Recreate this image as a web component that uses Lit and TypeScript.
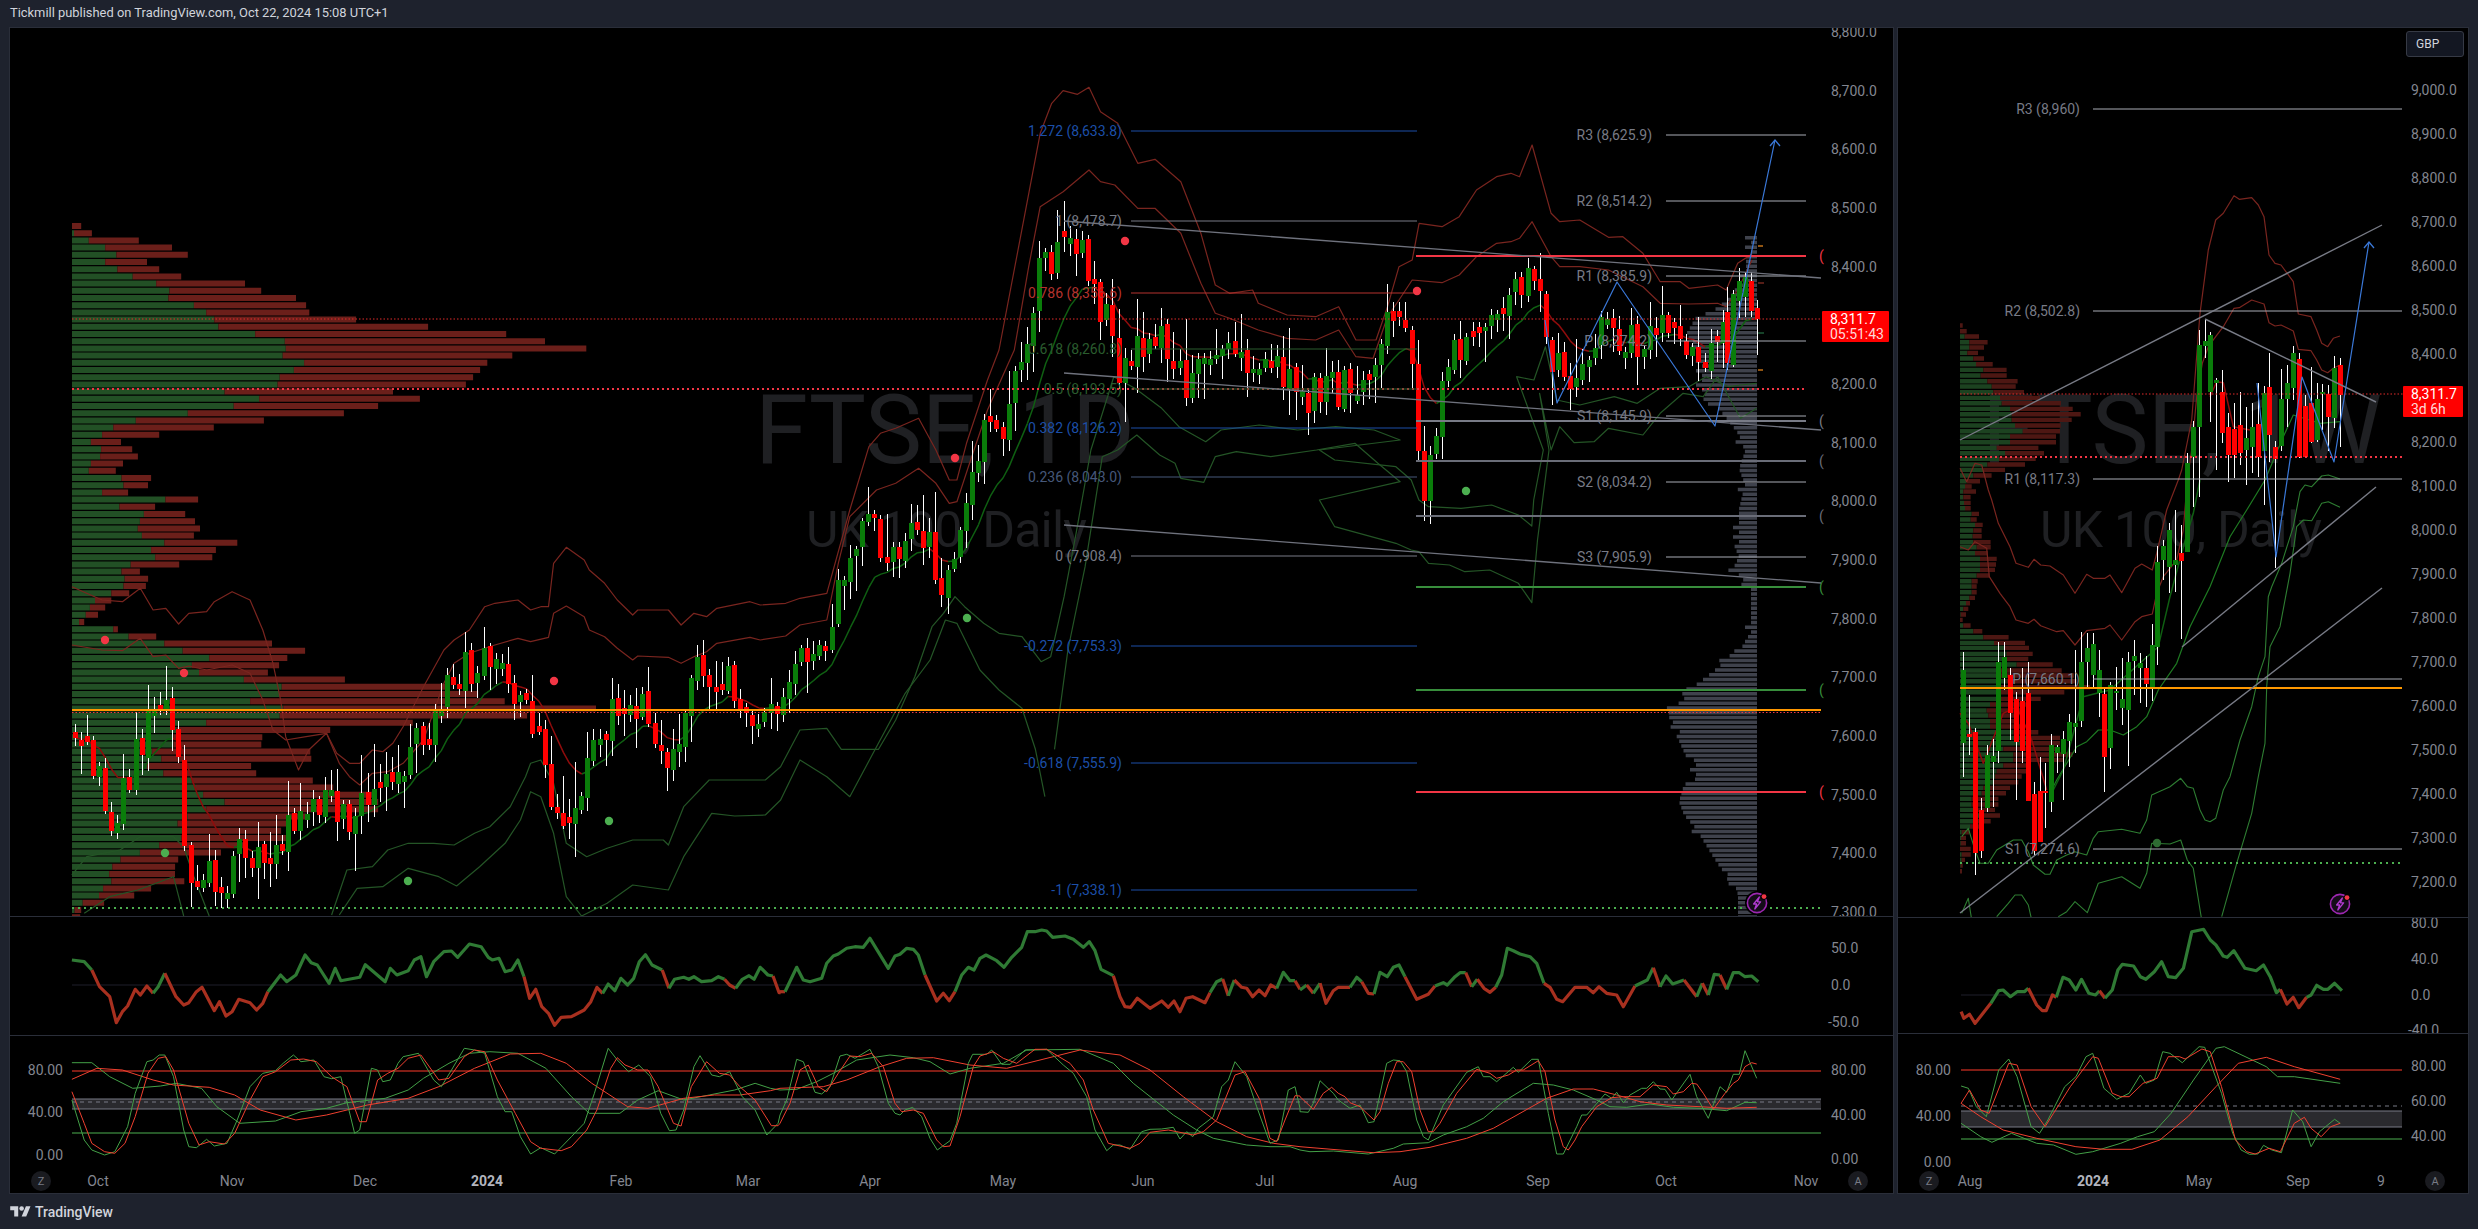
import { LitElement, html, svg, css } from "lit";
import { customElement } from "lit/decorators.js";

type P = number[];
const Z = (ox: number, oy: number, hf: number, pts: P[]) => pts.map(([x, y]) => [ox + x / hf, oy + y / 3]);
const d = (pts: P[]) => "M" + pts.map((p) => p[0].toFixed(1) + " " + p[1].toFixed(1)).join("L");
const rng = (seed: number) => () => {
  seed |= 0; seed = (seed + 0x6d2b79f5) | 0;
  let t = Math.imul(seed ^ (seed >>> 15), 1 | seed);
  t = (t + Math.imul(t ^ (t >>> 7), 61 | t)) ^ t;
  return ((t ^ (t >>> 14)) >>> 0) / 4294967296;
};
const interp = (tab: P[], x: number) => {
  if (x <= tab[0][0]) return tab[0][1];
  for (let i = 1; i < tab.length; i++) {
    if (x <= tab[i][0]) {
      const [a, b] = tab[i - 1], [c, e] = tab[i];
      return b + ((e - b) * (x - a)) / (c - a || 1);
    }
  }
  return tab[tab.length - 1][1];
};
const rectPath = (x: number, y: number, w: number, h: number) =>
  `M${x.toFixed(1)} ${y.toFixed(1)}h${w.toFixed(1)}v${h.toFixed(1)}h${(-w).toFixed(1)}z`;

const C = {
  axis: "#838690", hline: "#a9acb5", gray: "#787b86", red: "#f23645", green: "#388e3c",
  orange: "#ff9800", blue: "#1c4fa8", dimGreen: "#2a5c2e", slate: "#46587a", bRed: "#b5332e",
  upRed: "#7a251f", lowGreen: "#245526", candleUp: "#0a7d0a", candleDn: "#ff0000", zig: "#3a78d8",
};

/* ---------- left chart data ---------- */
const LP = [
  [141,159,0],[145,180],[174,272],[206,337],[228,368],[206,288],[230,312],[260,355],[306,480],[332,512],[330,580],[380,600],[404,606],[420,698],[428,839],[500,992],[558,1068],[560,1149],[554,1004],[596,955],[576,941],[548,927],[544,913],[440,770],[508,823],
  [458,741],[368,674],[266,517],[222,419],[200,312],[178,237],[198,259],[196,270],[178,241],[174,227],[238,296],[242,290],[200,251],[324,388],[234,304],[282,363],[274,382],[270,392],[278,380],[322,465],[296,423],[304,416],[256,351],[238,274],[244,290],[242,286],[218,253],[186,218],[176,206],[168,192],[155,165],[222,231],[252,306],[322,533],[358,598],[410,563],[376,547],[390,525],[478,676],[552,872],[548,937],[490,989],[555,1168],[548,1033],[404,809],[346,647],[340,514],[340,512],[298,608],[316,610],[288,492],[320,502],[376,613],[384,653],[398,735],[440,741],[404,741],[368,600],[348,570],[360,551],[355,560],[312,480],[274,433],[236,349],[220,343],[214,343],[218,361],[202,296],[194,263],[162,204],[146,159],[141,157],
];
const lpG = LP.map((r, i) => rectPath(72, 223 + i * 7.2, (r[0] - 141) / 1.96, 6)).join("");
const lpR = LP.map((r, i) => rectPath(72 + (r[0] - 141) / 1.96, 223 + i * 7.2, (r[1] - r[0]) / 1.96, 6)).join("");

const GP: P[] = [[236,6],[252,6],[253,11],[277,11],[285,20],[297,28],[307,41],[317,62],[333,71],[345,60],[360,55],[390,55],[400,45],[417,30],[433,18],[450,12],[467,18],[483,12],[507,18],[540,18],[541,24],[555,18],[567,24],[580,12],[587,6],[633,6],[637,12],[643,12],[650,24],[657,30],[663,36],[670,44],[677,53],[683,61],[690,67],[697,73],[707,85],[713,90],[727,79],[737,73],[750,67],[763,61],[777,61],[783,73],[800,78],[813,73],[827,61],[840,53],[853,45],[867,36],[877,24],[893,19],[916,19]];
const gpPath = (() => {
  const r = rng(9); let s = "";
  for (let y = 236; y < 916; y += 4.75) {
    const w = interp(GP, y) + (r() < 0.25 ? 6 : 0);
    s += rectPath(1757 - w, y, w, 3.4);
  }
  return s;
})();

const closePts: P[] = [
  ...Z(0, 400, 1.96, [[150,1000],[190,1100],[215,1300],[245,1180],[265,1040],[300,960],[325,870],[335,900],[350,1100],[360,1300],[372,1400],[410,1420],[430,1500],[455,1450],[467,1300],[490,1350],[525,1360],[550,1350],[575,1270],[600,1220],[660,1230],[695,1290],[715,1180],[770,1120],[810,1040],[835,1000],[860,950],[885,850],[930,785],[955,780],[990,840],[1030,900],[1060,1000],[1085,1200],[1100,1260],[1125,1190],[1170,1000],[1200,930],[1250,930],[1290,1000],[1310,1130],[1330,1020],[1350,900],[1360,780],[1385,860],[1420,850],[1460,920],[1490,940],[1530,880]]),
  ...Z(800, 350, 2.613, [[10,890],[55,940],[90,750],[130,560],[200,540],[250,620],[300,545],[345,600],[375,700],[405,650],[425,450],[465,360],[485,220],[515,190],[535,250],[555,100],[585,20]]),
  ...Z(1000, 0, 1.742, [[55,900],[75,770],[110,750],[145,770],[175,900],[215,1150],[240,1000],[285,1020],[330,1170],[390,1040],[430,1100],[490,1120],[530,1180],[570,1150],[640,1200],[670,1000],[700,880],[715,1100],[730,1350]]),
  ...Z(1350, 450, 2.613, [[177,150],[207,85]]),
  ...Z(1000, 0, 1.742, [[760,1250],[790,1080],[820,950],[870,1000],[915,830],[940,830],[950,1000],[985,1150],[1010,1060],[1050,1000],[1090,1040],[1150,1000],[1170,1030],[1210,1060],[1240,1040],[1265,1000],[1270,900]]),
];

type Bar = { x: number; o: number; c: number; hi: number; lo: number };
const leftBars: Bar[] = (() => {
  const r = rng(42); const out: Bar[] = [];
  let prev = 735;
  for (let i = 0; i < 271; i++) {
    const x = 75 + i * 6.105;
    const c = interp(closePts, x) + (r() - 0.5) * 44;
    let o = prev + (r() - 0.5) * 6;
    if (Math.abs(o - c) < 4) o = c + (r() < 0.5 ? 6 : -6);
    const top = Math.min(o, c), bot = Math.max(o, c);
    out.push({ x, o, c, hi: top - 3 - r() * r() * 44, lo: bot + 3 + r() * r() * 38 });
    prev = c;
  }
  const tail = [[146,335,490,1,260,510],[158,282,495,0,270,500],[170,243,303,0,205,355],[181,232,290,0,215,350],[192,243,332,1,215,350],[203,323,358,1,300,465]];
  for (const [zx, a, b, dn, h, l] of tail) {
    const top = 200 + a / 3, bot = 200 + b / 3;
    out.push({ x: 1650 + zx / 1.894, o: dn ? top : bot, c: dn ? bot : top, hi: 200 + h / 3, lo: 200 + l / 3 });
  }
  return out;
})();

const barPaths = (bars: Bar[], w: number) => {
  let up = "", dn = "", wick = "";
  for (const b of bars) {
    const t = Math.min(b.o, b.c), h = Math.max(Math.abs(b.o - b.c), 2);
    wick += rectPath(b.x - 0.5, b.hi, 1, b.lo - b.hi);
    if (b.c < b.o) up += rectPath(b.x - w / 2, t, w, h);
    else dn += rectPath(b.x - w / 2, t, w, h);
  }
  return { up, dn, wick };
};
const lb = barPaths(leftBars, 5);

const emaSegs = (bars: Bar[], n: number) => {
  const a = 2 / (n + 1); let e = bars[0].c; const g: string[] = [], rd: string[] = [];
  bars.forEach((b, i) => {
    const p = e; e = e + a * (b.c - e);
    if (i) (b.c < e ? g : rd).push(`M${bars[i - 1].x.toFixed(1)} ${p.toFixed(1)}L${b.x.toFixed(1)} ${e.toFixed(1)}`);
  });
  return { g: g.join(""), r: rd.join("") };
};
const lEma = emaSegs(leftBars, 12);

const uOuter = [
  ...Z(0, 400, 1.96, [[141,560],[200,600],[240,605],[275,565],[300,630],[325,625],[350,672],[370,640],[405,635],[420,605],[455,575],[490,600],[515,690],[535,790],[550,900],[560,1010],[585,1110],[605,1050],[640,1000],[660,1060],[685,1090],[705,1090],[730,1050],[750,1055],[770,1030],[790,980],[830,860],[870,750],[890,720],[920,690],[950,620],[970,610],[1015,600],[1040,630],[1060,620],[1075,620],[1085,490],[1110,442],[1145,480],[1155,510],[1185,550],[1210,600],[1240,645],[1250,630],[1310,630],[1335,675],[1360,640],[1385,650],[1405,625],[1470,605],[1490,615],[1540,610]]),
  ...Z(800, 350, 2.613, [[0,745],[70,730],[130,480],[180,290],[210,250],[250,235],[310,205],[355,300],[390,390],[410,390],[435,280],[490,90],[520,0]]),
  ...Z(1000, 0, 1.742, [[70,400],[90,310],[110,272],[135,283],[155,262],[175,335],[205,370],[240,490],[270,478],[315,545],[350,700],[375,855],[400,880],[440,870],[450,910],[500,945],[550,950],[590,920],[620,1020],[655,1020],[675,920],[695,800],[718,780],[730,670],[770,680],[800,650],[830,570],[865,530],[890,520],[905,530],[927,435],[960,640],[975,665],[1010,660],[1060,712],[1085,710],[1120,760],[1150,845],[1185,845],[1200,865],[1250,855],[1265,870],[1285,790],[1310,762]]),
];
const uInner = [
  ...Z(0, 400, 1.96, [[141,735],[200,750],[240,752],[275,715],[300,770],[325,765],[350,805],[370,798],[405,810],[455,795],[490,820],[515,900],[535,990],[560,1020],[600,1010],[640,1000],[665,1090],[685,1130],[705,1155],[730,1120],[760,1115],[790,1090],[830,1020],[870,850],[890,790],[920,760],[950,745],[970,735],[1015,715],[1040,725],[1075,712],[1085,640],[1110,618],[1145,650],[1155,690],[1185,710],[1210,745],[1240,780],[1250,768],[1310,772],[1335,790],[1360,770],[1385,755],[1405,730],[1470,712],[1490,720],[1540,708]]),
  ...Z(800, 350, 2.613, [[0,825],[70,810],[100,640],[130,500],[200,420],[250,400],[310,355],[355,400],[390,460],[410,455],[440,350],[490,180],[560,0]]),
  ...Z(1000, 0, 1.742, [[50,800],[70,620],[110,575],[155,510],[175,545],[200,555],[240,625],[270,625],[315,700],[350,850],[375,940],[400,955],[450,990],[500,1015],[550,1020],[590,990],[620,1070],[650,1075],[675,950],[695,900],[718,840],[770,848],[800,825],[830,770],[865,730],[890,725],[905,715],[927,665],[960,770],[975,800],[1010,800],[1060,810],[1120,860],[1150,910],[1200,912],[1250,910],[1265,920],[1285,870],[1310,780]]),
];
const lowA = [
  ...Z(0, 400, 1.96, [[141,1425],[170,1370],[235,1350],[275,1310],[340,1310],[360,1340],[380,1430],[410,1548]]),
];
const lowA2 = [
  ...Z(0, 400, 1.96, [[650,1545],[680,1410],[730,1400],[760,1350],[800,1330],[850,1330],[890,1335],[930,1300],[960,1280],[1000,1220],[1030,1130],[1040,1090],[1060,1080],[1085,1150],[1110,1330],[1150,1370],[1190,1345],[1240,1320],[1300,1320],[1310,1335],[1340,1220],[1390,1140],[1500,1140],[1530,1100]]),
  ...Z(800, 350, 2.613, [[0,1140],[70,1135],[108,1198],[205,1198],[250,1110],[300,980],[345,830],[375,790],[405,740],[430,770],[480,820],[520,850],[580,860],[630,935],[655,920],[690,740],[720,560],[760,300],[820,80],[875,115],[945,175],[990,230],[1060,275],[1100,240],[1200,225],[1300,240],[1400,230],[1500,240],[1568,270]]),
  ...Z(1350, 450, 2.613, [[-80,0],[-40,30],[120,50],[160,90],[180,150],[205,170],[290,175],[370,165],[440,195],[475,228],[480,150],[505,0]]),
  ...Z(1000, 0, 1.742, [[900,1130],[930,1140],[950,1040],[970,1200],[1010,1215],[1070,1190],[1110,1210],[1150,1165],[1200,1160],[1230,1130],[1270,1160],[1290,1155],[1318,1150]]),
];
const lowB = Z(0, 400, 1.96, [[165,1540],[215,1490],[270,1470],[340,1430],[360,1548]]);
const lowB2 = [
  ...Z(0, 400, 1.96, [[665,1545],[700,1465],[750,1460],[800,1405],[860,1430],[895,1458],[940,1400],[990,1330],[1020,1260],[1040,1175],[1060,1190],[1085,1300],[1110,1490],[1140,1548],[1190,1510],[1240,1455],[1310,1470],[1340,1370],[1395,1240],[1440,1248],[1500,1245],[1530,1200]]),
  ...Z(800, 350, 2.613, [[0,1230],[70,1280],[130,1340],[275,1030],[340,930],[380,810],[410,820],[470,960],[520,1020],[580,1075],[615,1198],[640,1340]]),
];
const lowB3 = [
  ...Z(800, 350, 2.613, [[665,1198],[700,900],[745,650],[790,320],[830,300],[880,255],[940,315],[980,340],[995,385],[1055,397],[1085,320],[1140,305],[1230,320],[1350,300],[1450,280],[1510,340],[1568,395]]),
  ...Z(1350, 450, 2.613, [[-80,150],[-40,230],[120,280],[160,300],[180,305],[205,340],[260,345],[300,365],[365,360],[440,400],[475,458],[490,270],[520,0]]),
  ...Z(1000, 0, 1.742, [[940,1180],[960,1350],[975,1280],[1000,1328],[1035,1325],[1060,1285],[1120,1305],[1150,1240],[1190,1180],[1225,1190],[1250,1130],[1290,1255],[1318,1225]]),
];

const lRsi: [string, P[]][] = [
  ["g", Z(0,880,1.96,[[141,240],[165,245],[180,270]])],
  ["r", Z(0,880,1.96,[[180,270],[195,320],[215,350],[228,428],[240,395],[250,378],[265,328],[275,345],[288,318],[300,340]])],
  ["g", Z(0,880,1.96,[[300,340],[310,320],[323,280]])],
  ["r", Z(0,880,1.96,[[323,280],[345,350],[360,375],[370,368],[385,335],[396,322],[420,392],[430,365],[443,408],[455,395],[468,358],[490,368],[503,390],[515,370],[525,335]])],
  ["g", Z(0,880,1.96,[[525,335],[550,285],[562,305],[580,285],[598,225],[610,248],[622,255],[645,310],[657,265],[668,302],[705,292],[716,254],[755,305],[765,265],[778,285],[800,272],[812,240],[825,230],[836,290],[850,245],[870,215],[885,213],[897,232],[920,192],[943,200],[957,232],[965,240],[978,235],[990,275],[1003,270],[1015,240],[1027,290]])],
  ["r", Z(0,880,1.96,[[1027,290],[1038,355],[1050,328],[1062,380],[1075,400],[1087,436],[1100,412],[1120,410],[1145,390],[1158,365],[1170,322],[1181,340]])],
  ["g", Z(0,880,1.96,[[1181,340],[1192,312],[1205,332],[1217,295],[1230,315],[1242,295],[1253,245],[1265,224],[1278,255],[1298,270]])],
  ["r", Z(0,880,1.96,[[1298,270],[1311,325]])],
  ["g", Z(0,880,1.96,[[1311,325],[1322,298],[1340,292],[1350,298],[1360,290],[1375,305],[1395,302],[1408,290],[1420,298]])],
  ["r", Z(0,880,1.96,[[1420,298],[1430,315],[1442,325]])],
  ["g", Z(0,880,1.96,[[1442,325],[1455,298],[1468,287],[1478,298],[1490,262],[1505,285],[1515,288]])],
  ["r", Z(0,880,1.96,[[1515,288],[1527,338],[1530,338]])],
  ["r", Z(780,930,3,[[0,185],[15,185]])],
  ["g", Z(780,930,3,[[15,185],[50,112],[70,150],[90,155],[125,145],[140,100],[160,78],[175,72],[200,55],[225,50],[250,52],[270,25],[325,115],[345,78],[360,73],[380,55],[400,58],[415,75],[435,135]])],
  ["r", Z(780,930,3,[[435,135],[470,213],[490,190],[508,212],[525,185]])],
  ["g", Z(780,930,3,[[525,185],[545,135],[565,112],[582,120],[600,85],[618,75],[650,92],[672,112],[695,82],[725,52],[742,5],[765,5],[785,0],[800,3],[818,22],[855,18],[880,28],[910,52],[928,35],[945,62],[963,118],[1000,137]])],
  ["r", Z(780,930,3,[[1000,137],[1020,200],[1035,230],[1052,232],[1072,205],[1110,235],[1145,213],[1165,232],[1182,213],[1200,245],[1218,205],[1238,200],[1275,218],[1290,188]])],
  ["g", Z(780,930,3,[[1290,188],[1310,155],[1328,147]])],
  ["r", Z(780,930,3,[[1328,147],[1345,197]])],
  ["g", Z(780,930,3,[[1345,197],[1363,150]])],
  ["r", Z(780,930,3,[[1363,150],[1385,172],[1400,175],[1418,200],[1437,180],[1455,197],[1472,165],[1490,175]])],
  ["g", Z(780,930,3,[[1490,175],[1510,127],[1530,152],[1545,152]])],
  ["r", Z(780,930,3,[[1545,152],[1560,178]])],
  ["g", Z(1300,930,3,[[0,180],[20,165]])],
  ["r", Z(1300,930,3,[[20,165],[40,190]])],
  ["g", Z(1300,930,3,[[40,190],[60,160]])],
  ["r", Z(1300,930,3,[[60,160],[78,220],[100,182],[115,172],[150,172]])],
  ["g", Z(1300,930,3,[[150,172],[170,142],[185,155]])],
  ["r", Z(1300,930,3,[[185,155],[205,190],[222,192]])],
  ["g", Z(1300,930,3,[[222,192],[240,127],[262,140],[280,112],[297,105],[315,140]])],
  ["r", Z(1300,930,3,[[315,140],[350,208],[385,193],[405,168]])],
  ["g", Z(1300,930,3,[[405,168],[430,158],[442,165],[465,140],[480,128],[497,128]])],
  ["r", Z(1300,930,3,[[497,128],[515,170]])],
  ["g", Z(1300,930,3,[[515,170],[532,148]])],
  ["r", Z(1300,930,3,[[532,148],[552,175],[570,187],[587,172]])],
  ["g", Z(1300,930,3,[[587,172],[605,135],[622,55],[640,62],[660,72],[690,80],[710,100],[732,160]])],
  ["r", Z(1300,930,3,[[732,160],[750,172],[770,208],[788,215],[825,172],[860,172],[880,188],[897,170],[920,190],[950,195],[970,230],[1005,168]])],
  ["g", Z(1300,930,3,[[1005,168],[1042,150],[1060,113]])],
  ["r", Z(1300,930,3,[[1060,113],[1080,170]])],
  ["g", Z(1300,930,3,[[1080,170],[1098,138],[1118,162],[1152,150]])],
  ["r", Z(1300,930,3,[[1152,150],[1190,200]])],
  ["g", Z(1300,930,3,[[1190,200],[1207,160]])],
  ["r", Z(1300,930,3,[[1207,160],[1225,195]])],
  ["g", Z(1300,930,3,[[1225,195],[1243,133],[1260,135]])],
  ["r", Z(1300,930,3,[[1260,135],[1280,178]])],
  ["g", Z(1300,930,3,[[1280,178],[1300,128],[1318,128],[1335,140],[1355,138],[1375,155]])],
];

const lFastG = [
  ...Z(0,880,1.96,[[141,660],[165,780],[180,810],[205,825],[225,815],[250,740],[265,640],[288,545],[300,540],[312,525],[323,525],[340,590],[360,750],[370,800],[385,803],[405,778],[420,798],[445,790],[465,720],[490,620],[515,580],[540,572],[555,550],[575,525],[590,545],[615,540],[635,590],[650,596],[668,590],[695,760],[705,750],[728,565],[740,570],[750,605],[765,600],[780,550],[790,530],[820,520],[850,600],[865,620],[885,570],[910,505],[930,510],[950,520],[975,650],[990,695],[1003,695],[1020,770],[1040,822],[1060,803],[1087,822],[1120,770],[1145,730],[1165,640],[1192,505],[1210,540],[1232,575],[1252,555],[1275,590],[1295,700],[1312,752],[1325,750],[1340,690],[1360,560],[1372,527],[1395,585],[1410,590],[1430,575],[1455,650],[1480,690],[1503,765],[1525,730]]),
  ...Z(780,930,3,[[0,555],[20,510],[50,388],[70,395],[105,487],[125,492],[150,470],[180,378],[200,373],[225,385],[270,358],[295,410],[325,520],[345,550],[360,555],[375,540],[398,532],[425,560],[450,625],[472,660],[510,632],[530,580],[565,400],[578,373],[620,373],[635,360],[665,403],[690,403],[735,360],[800,358],[850,405],[880,430],[920,500],[945,600],[980,662],[1000,645],[1020,645],[1050,658],[1085,605],[1110,598],[1145,597],[1180,592],[1200,627],[1220,605],[1238,620],[1255,595],[1300,560],[1325,470],[1345,450],[1365,395],[1400,440],[1430,530],[1470,640],[1495,630],[1525,480],[1545,470],[1560,535]]),
  ...Z(1300,930,3,[[0,545],[25,547],[40,520],[60,452],[100,490],[115,510],[150,535],[180,525],[205,578],[222,575],[260,400],[280,390],[300,392],[320,425],[350,570],[370,620],[385,630],[430,525],[500,427],[535,410],[550,440],[570,440],[590,455],[640,412],[655,427],[695,388],[715,388],[745,550],[770,672],[790,672],[830,590],[845,555],[860,555],[915,492],[935,505],[950,487],[970,518],[990,495],[1025,475],[1040,475],[1060,455],[1080,477],[1095,478],[1115,510],[1170,433],[1190,500],[1225,565],[1260,470],[1280,487],[1300,433],[1318,433],[1335,362],[1370,445]]),
];
const lFastR = [
  ...Z(0,880,1.96,[[141,635],[165,730],[180,790],[205,815],[225,820],[245,790],[265,710],[290,580],[310,535],[325,530],[340,570],[370,730],[390,795],[410,785],[440,792],[460,760],[490,660],[515,590],[540,575],[570,540],[595,537],[620,545],[650,590],[680,620],[705,725],[718,725],[740,600],[760,580],[780,565],[800,535],[825,525],[860,600],[880,595],[910,530],[930,510],[950,515],[975,600],[1010,700],[1040,785],[1060,805],[1100,812],[1120,800],[1150,750],[1170,690],[1197,565],[1210,533],[1225,555],[1250,570],[1270,570],[1290,620],[1320,730],[1335,738],[1355,620],[1385,545],[1410,580],[1430,585],[1450,620],[1480,660],[1512,737],[1525,737]]),
  ...Z(780,930,3,[[0,580],[30,520],[60,420],[85,405],[115,470],[140,485],[175,430],[210,378],[240,380],[275,370],[310,410],[345,520],[365,545],[400,540],[430,550],[470,630],[490,650],[510,648],[540,560],[580,410],[600,378],[640,365],[670,385],[710,400],[765,358],[800,358],[870,400],[910,450],[940,540],[985,640],[1050,655],[1080,640],[1110,607],[1165,600],[1190,605],[1240,615],[1270,605],[1310,570],[1365,435],[1395,425],[1440,510],[1470,625],[1490,635],[1515,570],[1545,497],[1560,498]]),
  ...Z(1300,930,3,[[0,500],[40,538],[70,490],[95,472],[115,490],[135,500],[150,518],[180,530],[222,570],[240,545],[265,460],[290,395],[310,395],[335,425],[360,540],[385,605],[400,605],[420,580],[470,490],[530,418],[570,430],[590,445],[625,435],[650,420],[670,420],[715,392],[735,425],[765,570],[790,650],[805,660],[825,630],[845,590],[890,530],[935,503],[970,500],[1020,500],[1060,465],[1100,470],[1120,492],[1150,485],[1175,460],[1190,462],[1210,490],[1240,538],[1275,490],[1300,460],[1315,450],[1335,410],[1355,398],[1370,402]]),
];
const lLongG = [
  ...Z(0,880,1.96,[[141,548],[180,548],[215,590],[260,625],[315,618],[345,610],[395,625],[425,680],[470,730],[540,723],[590,695],[640,685],[680,668],[715,662],[755,655],[800,630],[830,595],[880,550],[920,520],[960,515],[1015,520],[1070,565],[1120,650],[1155,700],[1215,700],[1250,660],[1290,632],[1340,660],[1390,645],[1440,630],[1480,610],[1510,625]]),
  ...Z(780,930,3,[[0,480],[50,478],[110,455],[160,430],[230,390],[330,375],[400,383],[450,395],[510,432],[570,415],[670,400],[740,360],[900,358],[1000,400],[1060,460],[1180,555],[1250,600],[1300,625],[1400,645],[1470,650],[1530,650],[1560,660]]),
  ...Z(1300,930,3,[[30,665],[100,663],[205,672],[280,655],[310,642],[385,638],[430,615],[500,590],[550,565],[610,515],[700,460],[760,465],[820,480],[890,510],[930,530],[980,532],[1050,522],[1120,532],[1200,535],[1280,542],[1335,517],[1370,518]]),
];
const lLongR = [
  ...Z(0,880,1.96,[[141,598],[190,565],[240,570],[300,600],[340,615],[410,622],[460,645],[510,690],[580,720],[640,705],[720,675],[800,655],[860,620],[930,565],[1000,522],[1060,520],[1110,550],[1160,610],[1230,680],[1270,685],[1340,655],[1400,645],[1450,645],[1510,632]]),
  ...Z(780,930,3,[[0,475],[130,470],[200,450],[300,410],[380,385],[460,383],[570,405],[680,415],[780,390],[900,360],[1020,375],[1110,420],[1210,500],[1310,575],[1400,620],[1480,640],[1560,650]]),
  ...Z(1300,930,3,[[120,660],[220,668],[300,665],[390,652],[500,625],[580,595],[660,550],[740,505],[820,477],[880,477],[950,495],[1020,515],[1100,525],[1200,530],[1280,535],[1370,532]]),
];

/* ---------- right chart data ---------- */
const b12 = [[40,570,790,0,515,890],[58,762,770,1,645,825],[76,755,1118,1,745,1185],[94,990,1112,1,955,1135],[112,825,985,0,795,995],[130,828,845,0,778,980],[146,545,812,0,485,850],[163,530,595,0,486,630],[181,585,700,1,565,780],[199,657,785,1,635,960],[217,662,812,1,565,850],[235,638,962,1,545,962],[253,942,1112,1,905,1125],[271,932,1085,1,830,1085],[287,932,940,1,850,1045],[305,795,965,0,762,995],[323,800,820,0,795,880],[340,778,822,0,752,960],[358,725,782,0,702,862],[376,730,742,0,510,820],[394,545,722,0,456,742],[412,505,545,0,460,620],[430,492,585,0,458,620],[448,570,638,0,510,710],[464,642,830,1,620,935],[482,615,803,0,605,868],[500,632,634,0,560,690],[518,657,685,0,535,735],[535,546,690,0,516,857],[553,528,542,0,480,645],[571,548,563,0,520,668],[589,564,612,1,528,680],[607,495,620,0,432,662],[623,245,500,0,198,555],[641,198,240,0,180,300],[658,150,260,0,130,340],[676,240,255,0,90,335],[694,220,243,1,135,478],[712,-51,215,0,-80,215]];
const b11 = [[730,1190,1282,0,1172,1430],[748,945,1190,0,900,1400],[766,933,947,0,868,985],[782,915,1085,0,905,1175],[799,1050,1060,0,1043,1320],[818,1085,1210,1,1020,1240],[835,1192,1275,1,1150,1355],[853,1197,1275,1,1118,1345],[871,1185,1268,1,1085,1305],[889,1225,1260,0,1130,1365],[907,1190,1250,0,1118,1330],[925,1182,1282,1,1058,1340],[943,1090,1262,0,1068,1425],[958,1072,1215,1,968,1295],[976,1250,1288,1,1232,1615],[994,1108,1248,0,1017,1262],[1012,1060,1107,0,1005,1190],[1030,968,1075,0,948,1110],[1048,988,1280,1,970,1285],[1066,1128,1280,1,1095,1285],[1084,1120,1235,1,1012,1240],[1102,1108,1230,0,1060,1235],[1118,1086,1090,0,1062,1200],[1136,1092,1162,1,1065,1262],[1154,1014,1163,0,978,1195],[1172,1005,1095,1,985,1250]];
const mkBar = (oy: number) => ([zx, a, b, dn, h, l]: number[]): Bar => {
  const t = oy + a / 3, bt = oy + b / 3;
  return { x: 1950 + zx / 3, o: dn ? t : bt, c: dn ? bt : t, hi: oy + h / 3, lo: oy + l / 3 };
};
const rightBars = [...b12.map(mkBar(480)), ...b11.map(mkBar(30))];
const rb = barPaths(rightBars, 5);

const RP11 = [[880,30,38],[897,30,50],[913,44,87],[930,58,113],[946,58,102],[962,52,84],[979,70,102],[996,78,128],[1013,100,170],[1030,92,170],[1047,112,203],[1063,125,197],[1080,130,222],[1097,150,270],[1113,155,333],[1130,180,368],[1146,185,392],[1163,185,365],[1180,195,332],[1197,218,330],[1213,180,318],[1230,180,318],[1247,140,265],[1263,165,282],[1280,147,257],[1297,112,225],[1313,100,165],[1330,70,125],[1347,50,90],[1363,45,65]];
const RP12 = [[28,40,78],[45,40,62],[62,42,62],[78,45,62],[95,65,87],[112,62,80],[128,75,98],[145,70,95],[162,68,95],[180,70,122],[195,80,122],[213,75,113],[230,90,140],[247,90,138],[263,90,135],[280,80,118],[297,65,83],[313,65,80],[330,65,80],[347,58,75],[363,48,60],[380,40,55],[397,32,48],[413,30,38],[430,40,62],[447,70,97],[465,100,176],[482,132,225],[497,165,237],[515,170,248],[530,160,235],[547,200,308],[565,150,335],[580,150,372],[597,170,380],[615,145,420],[630,145,343],[650,140,272],[667,120,230],[685,110,215],[700,115,200],[717,120,205],[733,120,225],[750,190,265],[767,240,330],[783,240,330],[800,160,320],[817,190,368],[833,190,340],[850,160,240],[867,140,230],[883,135,215],[900,130,205],[917,100,180],[933,95,168],[950,65,145],[967,65,145],[983,80,135],[1000,90,150],[1017,75,122],[1033,60,102],[1050,35,58],[1067,33,48],[1083,32,48],[1100,30,62],[1117,35,62],[1133,35,45],[1150,32,38],[1167,30,36]];
const rRows = [...RP11.map(([v, g, t]) => [30 + v / 3, g, t]), ...RP12.map(([v, g, t]) => [480 + v / 3, g, t])];
const rpG = rRows.map(([y, g]) => rectPath(1960, y, (g - 30) / 3, 4.4)).join("");
const rpR = rRows.map(([y, g, t]) => rectPath(1950 + g / 3, y, (t - g) / 3, 4.4)).join("");

const rOuter = [
  ...Z(1950,30,3,[[30,1315],[50,1355],[75,1300],[95,1305],[115,1380]]),
  ...Z(1950,480,3,[[125,60],[145,130],[180,200],[198,250],[235,262],[252,238],[272,255],[300,258],[340,285],[375,340],[410,283],[430,295],[465,295],[480,285],[515,338],[555,265],[575,252],[607,270],[620,220],[650,90],[685,0]]),
  ...Z(1950,30,3,[[695,1320],[725,1170],[750,850],[775,660],[797,570],[820,550],[852,497],[868,508],[905,503],[925,525],[942,560],[957,675],[975,700],[993,705],[1030,755],[1045,852],[1083,860],[1100,900],[1115,940],[1133,950],[1150,925],[1170,918]]),
];
const rInner = [
  ...Z(1950,480,3,[[30,200],[55,210],[75,185],[110,205],[118,290],[150,340],[180,380],[198,420],[235,430],[252,418],[272,437],[320,455],[340,452],[375,495],[410,452],[465,445],[480,435],[515,480],[555,425],[575,410],[607,402],[620,340],[640,290],[680,240],[700,150],[712,0]]),
  ...Z(1950,30,3,[[725,1260],[740,1100],[757,1000],[775,950],[797,920],[820,890],[852,835],[868,833],[905,810],[942,822],[957,878],[975,888],[993,885],[1030,903],[1045,958],[1083,962],[1100,990],[1115,1020],[1133,1028],[1150,1015],[1170,1005]]),
];
const rLowA = [
  ...Z(1950,480,3,[[35,1070],[55,1045],[75,1110],[90,1150],[115,1150],[140,1110],[190,1080],[215,1080],[235,1115],[250,1155],[285,1183],[300,1183],[320,1140],[350,1125],[375,1115],[410,1125],[430,1075],[445,1055],[515,1048],[570,1060],[590,1020],[605,945],[660,920],[692,895],[712,920],[730,925],[750,990],[765,1020],[780,1025],[797,1015],[820,930],[840,890],[870,780],[905,680],[925,590],[945,530],[955,350],[965,320],[995,250],[1030,140],[1050,35]]),
  ...Z(1950,30,3,[[1065,1365],[1085,1370],[1115,1338],[1135,1335],[1170,1347]]),
];
const rLowB1 = Z(1950,480,3,[[35,1300],[55,1255],[65,1320]]);
const rLowB2 = Z(1950,480,3,[[140,1310],[175,1270],[195,1245],[215,1245],[235,1275],[245,1320]]);
const rLowB3 = Z(1950,480,3,[[325,1310],[350,1295],[375,1265],[412,1298],[445,1210],[515,1190],[570,1225],[590,1180],[605,1090],[660,1092],[692,1080],[712,1140],[730,1165],[755,1320]]);
const rLowB4 = Z(1950,480,3,[[815,1310],[860,1150],[905,1000],[925,890],[945,790],[950,620],[960,500],[990,440],[1020,280],[1040,140],[1060,120],[1085,122],[1115,70],[1135,65],[1170,82]]);
const rMid = [
  ...Z(1950,480,3,[[300,940],[320,900],[380,800],[410,785],[445,750],[480,750],[520,765],[560,740],[590,710],[625,630],[680,550],[720,440],[780,320],[840,170],[890,90],[945,0]]),
  ...Z(1950,30,3,[[1000,1220],[1030,1155],[1110,1180],[1170,1175]]),
];
const rEmaG = Z(1950,480,3,[[310,930],[340,870],[370,760],[400,650],[440,640],[480,630],[625,500],[660,350],[700,200],[730,100],[750,0]]);
const rEmaR = Z(1950,480,3,[[30,700],[55,730],[100,850],[160,700],[200,680],[245,780],[290,930]]);
const rEmaR2 = Z(1950,30,3,[[780,1100],[800,1055],[820,1058],[850,1190],[900,1200]]);

const rRsi: [string, P[]][] = [
  ["r", Z(1600,880,1.786,[[645,395],[650,415],[660,403],[670,430],[698,370]])],
  ["g", Z(1600,880,1.786,[[698,370],[712,332],[720,330],[733,350],[745,335],[758,335],[765,325]])],
  ["r", Z(1600,880,1.786,[[765,325],[780,375],[790,392],[797,392],[808,345],[815,352]])],
  ["g", Z(1600,880,1.786,[[815,352],[827,292],[838,300],[850,330],[860,298],[873,340],[885,345],[892,332]])],
  ["r", Z(1600,880,1.786,[[892,332],[902,355]])],
  ["g", Z(1600,880,1.786,[[902,355],[915,330],[925,270],[933,253],[953,258],[965,290],[975,298],[990,275],[1003,245],[1015,290],[1028,293],[1042,265],[1057,155],[1078,148],[1090,180],[1100,195],[1113,228],[1120,232],[1132,212],[1152,265],[1172,272],[1185,255],[1197,290],[1208,338],[1215,328]])],
  ["r", Z(1600,880,1.786,[[1215,328],[1227,372],[1238,352],[1248,383],[1262,352]])],
  ["g", Z(1600,880,1.786,[[1262,352],[1270,345],[1280,316],[1292,328],[1300,328],[1312,310],[1325,332]])],
];
const rFastG = Z(1600,880,1.786,[[645,618],[658,625],[672,680],[690,710],[712,570],[730,537],[745,590],[770,740],[785,760],[800,720],[830,620],[850,590],[868,530],[880,520],[900,625],[923,658],[945,640],[965,585],[975,610],[990,600],[1005,515],[1018,520],[1040,548],[1070,500],[1080,502],[1110,640],[1130,760],[1145,810],[1160,823],[1175,822],[1185,796],[1200,810],[1217,818],[1237,690],[1255,725],[1270,800],[1285,755],[1312,718],[1322,730]]);
const rFastR = Z(1600,880,1.786,[[645,670],[660,630],[680,690],[695,700],[730,550],[745,555],[770,680],[795,740],[810,700],[840,620],[880,530],[890,535],[915,640],[930,650],[945,650],[970,610],[995,595],[1015,530],[1035,530],[1045,537],[1075,507],[1090,515],[1110,620],[1135,780],[1155,815],[1170,822],[1195,805],[1215,815],[1240,730],[1258,712],[1270,745],[1288,770],[1305,740],[1322,730]]);
const rLongG = Z(1600,880,1.786,[[645,730],[680,770],[700,787],[735,760],[780,790],[810,795],[850,823],[880,815],[930,790],[960,770],[990,755],[1020,700],[1060,600],[1100,505],[1115,500],[1190,560],[1210,590],[1240,590],[1322,610]]);
const rLongR = Z(1600,880,1.786,[[645,670],[680,710],[720,750],[780,775],[850,800],[900,808],[950,808],[1000,780],[1050,710],[1100,620],[1140,550],[1190,532],[1240,560],[1322,598]]);

/* ---------- svg helpers ---------- */
const line = (pts: P[], stroke: string, w = 1) =>
  svg`<path d=${d(pts)} fill="none" stroke=${stroke} stroke-width=${w} stroke-linejoin="round"/>`;
const hl = (x1: number, x2: number, y: number, stroke: string, w = 1, dash?: string) =>
  svg`<line x1=${x1} x2=${x2} y1=${y} y2=${y} stroke=${stroke} stroke-width=${w} stroke-dasharray=${dash ?? "none"}/>`;
const tx = (x: number, y: number, s: string, fill = C.axis, anchor = "start", cls = "ax") =>
  svg`<text class=${cls} x=${x} y=${y} fill=${fill} text-anchor=${anchor}>${s}</text>`;
const dot = (x: number, y: number, fill: string, r = 4.2) => svg`<circle cx=${x} cy=${y} r=${r} fill=${fill}/>`;
const rsiLines = (segs: [string, P[]][]) =>
  segs.map(([c, p]) => line(p, c === "g" ? "#2f7a34" : "#a8301f", 3.2));
const bolt = (cx: number, cy: number) => svg`
  <circle cx=${cx} cy=${cy} r="12" fill="#000"/>
  <circle cx=${cx} cy=${cy} r="9.6" fill="#140c18" stroke="#9c27b0" stroke-width="1.6"/>
  <path d="M${cx + 2.4} ${cy - 6}L${cx - 3.4} ${cy + 1}H${cx - 0.4}L${cx - 2.2} ${cy + 6}L${cx + 3.6} ${cy - 1.2}H${cx + 0.4}Z" fill="none" stroke="#b13cd0" stroke-width="1.3" stroke-linejoin="round"/>
  <circle cx=${cx + 7} cy=${cy - 6.4} r="3.2" fill="#000"/>
  <circle cx=${cx + 7} cy=${cy - 6.4} r="2.4" fill="#f23645"/>`;
const arrowHead = (x: number, y: number, s: string) =>
  svg`<path d="M${x - 5} ${y + 6}L${x} ${y}L${x + 5} ${y + 6}" fill="none" stroke=${s} stroke-width="1.3"/>`;
const circBtn = (x: number, y: number, s: string) => svg`
  <circle cx=${x} cy=${y} r="10" fill="#1a1b20"/>
  ${tx(x, y, s, "#787b86", "middle", "ax sm")}`;
const priceBox = (x: number, y: number, w: number, h: number, a: string, b: string) => svg`
  <rect x=${x} y=${y} width=${w} height=${h} fill="#ff0000" rx="1"/>
  ${tx(x + 8, y + 8, a, "#fff")}
  ${tx(x + 8, y + 23, b, "#ffd9d9")}`;

const pane = (x: number, y: number, w: number, h: number, cls: string, body: unknown) => html`
  <svg class=${"pane " + cls} width=${w} height=${h} viewBox="${x} ${y} ${w} ${h}">${body}</svg>`;

/* ---------- panes ---------- */
const fibs: [string, number, string][] = [
  ["1.272 (8,633.8)", 131, C.blue], ["1 (8,478.7)", 221, C.gray], ["0.786 (8,356.6)", 293, C.bRed],
  ["0.618 (8,260.8)", 349, C.dimGreen], ["0.5 (8,193.5)", 389, C.dimGreen], ["0.382 (8,126.2)", 428, C.blue],
  ["0.236 (8,043.0)", 477, C.slate], ["0 (7,908.4)", 556, C.gray], ["-0.272 (7,753.3)", 646, C.blue],
  ["-0.618 (7,555.9)", 763, C.blue], ["-1 (7,338.1)", 890, C.blue],
];
const pivots: [string, number][] = [
  ["R3 (8,625.9)", 135], ["R2 (8,514.2)", 201], ["R1 (8,385.9)", 276], ["P (8,274.2)", 341],
  ["S1 (8,145.9)", 416], ["S2 (8,034.2)", 482], ["S3 (7,905.9)", 557],
];
const thick: [number, string][] = [
  [256, C.red], [421, C.gray], [461, "#6a6d78"], [516, "#6a6d78"], [587, C.green], [690, C.green], [792, C.red],
];
const lPrices = [8800,8700,8600,8500,8400,8200,8100,8000,7900,7800,7700,7600,7500,7400,7300];
const fmt = (n: number) => n.toLocaleString("en-US") + ".0";

const leftMain = svg`
  <text class="wm big" x="755" y="463" textLength="380">FTSE, 1D</text>
  <text class="wm mid" x="806" y="547" textLength="281">UK 100, Daily</text>
  <path d=${lpG} fill="#225025"/>
  <path d=${lpR} fill="#6b1f1a"/>
  <path d=${gpPath} fill="#3f424c"/>
  ${line(uOuter, C.upRed, 1.2)} ${line(uInner, C.upRed, 1.2)}
  ${line(lowA, C.lowGreen, 1.2)} ${line(lowA2, C.lowGreen, 1.2)} ${line(lowB, C.lowGreen, 1.2)} ${line(lowB2, C.lowGreen, 1.2)} ${line(lowB3, C.lowGreen, 1.2)}
  <path d=${lEma.g} fill="none" stroke="#0f5f12" stroke-width="1.5"/>
  <path d=${lEma.r} fill="none" stroke="#8f0c0c" stroke-width="1.5"/>
  <g shape-rendering="crispEdges">
    <path d=${lb.wick} fill="#fff"/>
    <path d=${lb.up} fill=${C.candleUp}/>
    <path d=${lb.dn} fill=${C.candleDn}/>
  </g>
  ${hl(72, 1822, 319, "#e02a2a", 1, "1.5 2")}
  ${hl(72, 1806, 389, C.red, 2, "2 3")}
  ${hl(72, 1821, 710, C.orange, 2)}
  ${hl(72, 1821, 712.5, C.red, 1, "1.5 2")}
  ${hl(72, 1821, 908, "#4caf50", 2, "2 4")}
  ${fibs.map(([s, y, c]) => svg`${hl(1131, 1417, y, c, 1.2)}${tx(1122, y, s, c, "end")}`)}
  ${pivots.map(([s, y]) => svg`${hl(1666, 1806, y, C.hline, 1)}${tx(1652, y, s, C.gray, "end")}`)}
  ${thick.map(([y, c]) => svg`${hl(1416, 1806, y, c, 2)}${tx(1819, y, "(", c)}`)}
  ${line([[1064, 221], [1821, 278]], "#6f727d", 1.3)}
  ${line([[1064, 373], [1821, 430]], "#6f727d", 1.3)}
  ${line([[1064, 525], [1821, 583]], "#6f727d", 1.3)}
  ${line([[1545, 320], [1557, 403], [1617, 282], [1715, 426], [1775, 140]], C.zig, 1.2)}
  ${arrowHead(1775, 140, C.zig)}
  ${hl(1758, 1763, 246, "#d07a1a", 1.4)} ${hl(1758, 1763, 370, "#d07a1a", 1.4)}
  ${hl(1758, 1764, 283, "#7a2a20", 1.4)} ${hl(1758, 1764, 333, "#1f5f3a", 1.4)}
  ${[[1125,241],[1417,291],[955,458],[105,640],[184,673],[554,681]].map(([x, y]) => dot(x, y, C.red))}
  ${[[165,853],[408,881],[609,821],[967,618],[1466,491]].map(([x, y]) => dot(x, y, "#4caf50"))}
  ${lPrices.map((p) => tx(1831, 32 + (8800 - p) * 0.5866, fmt(p)))}
  ${priceBox(1822, 311, 67, 31, "8,311.7", "05:51:43")}
  ${bolt(1757, 903)}
`;
const leftRsi = svg`
  ${hl(72, 1760, 985, "#14141c", 1.4)}
  ${rsiLines(lRsi)}
  ${tx(1831, 948, "50.0")}${tx(1831, 985, "0.0")}${tx(1828, 1022, "-50.0")}
`;
const timeL: [number, string, boolean][] = [
  [98,"Oct",false],[232,"Nov",false],[365,"Dec",false],[487,"2024",true],[621,"Feb",false],[748,"Mar",false],[870,"Apr",false],[1003,"May",false],[1143,"Jun",false],[1265,"Jul",false],[1405,"Aug",false],[1538,"Sep",false],[1666,"Oct",false],[1806,"Nov",false],
];
const timeR: [number, string, boolean][] = [[1970,"Aug",false],[2093,"2024",true],[2199,"May",false],[2298,"Sep",false],[2381,"9",false]];
const timeLabels = (a: [number, string, boolean][]) =>
  a.map(([x, s, b]) => tx(x, 1181, s, b ? "#b2b5be" : C.axis, "middle", b ? "ax bold" : "ax"));
const stochBand = (x1: number, x2: number, top: number, bot: number, dash: number) => svg`
  <rect x=${x1} y=${top} width=${x2 - x1} height=${bot - top} fill="#2a2a2e"/>
  ${hl(x1, x2, top, "#787b86", 1)}${hl(x1, x2, bot, "#787b86", 1)}
  ${hl(x1, x2, dash, "#787b86", 1, "4 4")}`;
const leftStoch = svg`
  ${stochBand(72, 1821, 1099, 1109, 1102)}
  ${hl(72, 1821, 1071, "#ff3b2b", 1.2)}
  ${hl(72, 1821, 1133, "#4caf50", 1.2)}
  ${line(lLongG, "#43a047")}${line(lLongR, "#f0402f")}
  ${line(lFastG, "#43a047")}${line(lFastR, "#f0402f")}
  ${tx(63, 1070, "80.00", C.axis, "end")}${tx(63, 1112, "40.00", C.axis, "end")}${tx(63, 1155, "0.00", C.axis, "end")}
  ${tx(1831, 1070, "80.00")}${tx(1831, 1115, "40.00")}${tx(1831, 1159, "0.00")}
  ${timeLabels(timeL)}
  ${circBtn(41, 1181, "Z")}${circBtn(1858, 1181, "A")}
`;
const rPrices = [9000,8900,8800,8700,8600,8500,8400,8200,8100,8000,7900,7800,7700,7600,7500,7400,7300,7200];
const rPiv: [string, number][] = [["R3 (8,960)",109],["R2 (8,502.8)",311],["R1 (8,117.3)",479],["P (7,660.1)",679],["S1 (7,274.6)",849]];
const rightMain = svg`
  <text class="wm big" x="1982" y="463" textLength="400">FTSE, 1W</text>
  <text class="wm mid" x="2040" y="547" textLength="282">UK 100, Daily</text>
  <path d=${rpG} fill="#1c4220"/>
  <path d=${rpR} fill="#4d1713"/>
  ${line(rOuter, C.upRed, 1.2)}${line(rInner, C.upRed, 1.2)}
  ${line(rLowA, "#2e7d32", 1.1)}${line(rLowB1, "#2e7d32", 1.1)}${line(rLowB2, "#2e7d32", 1.1)}${line(rLowB3, "#2e7d32", 1.1)}${line(rLowB4, "#2e7d32", 1.1)}
  ${line(rMid, "#1e7a22", 1.2)}${line(rEmaG, "#0f5f12", 1.5)}
  ${line(rEmaR, "#8f0c0c", 1.5)}${line(rEmaR2, "#8f0c0c", 1.5)}
  <g shape-rendering="crispEdges">
    <path d=${rb.wick} fill="#fff"/>
    <path d=${rb.up} fill=${C.candleUp}/>
    <path d=${rb.dn} fill=${C.candleDn}/>
  </g>
  ${hl(1960, 2403, 394, "#e02a2a", 1, "1.5 2")}
  ${hl(1960, 2402, 457, C.red, 2, "2 3")}
  ${hl(1960, 2402, 688, C.orange, 2)}
  ${hl(1960, 2402, 863, "#4caf50", 2, "2 4")}
  ${rPiv.map(([s, y]) => svg`${hl(2093, 2402, y, C.hline, 1)}${tx(2080, y, s, C.gray, "end")}`)}
  ${line([[1960, 440], [2382, 225]], C.gray, 1.4)}
  ${line([[2182, 647], [2376, 487]], C.gray, 1.4)}
  ${line([[1960, 913], [2382, 588]], C.gray, 1.4)}
  ${line([[2205, 319], [2376, 402]], C.gray, 1.4)}
  ${line([[2257, 383], [2276, 557], [2302, 377], [2334, 462], [2369, 242]], C.zig, 1.2)}
  ${arrowHead(2369, 242, C.zig)}
  ${dot(2157, 843, "#2e6b32")}
  ${rPrices.map((p) => tx(2411, 310 + (8500 - p) * 0.44, fmt(p)))}
  ${priceBox(2403, 386, 60, 31, "8,311.7", "3d 6h")}
  ${bolt(2340, 904)}
`;
const rightRsi = svg`
  ${hl(1961, 2340, 995, "#14141c", 1.4)}
  ${rsiLines(rRsi)}
  ${tx(2411, 923, "80.0")}${tx(2411, 959, "40.0")}${tx(2411, 995, "0.0")}${tx(2408, 1030, "-40.0")}
`;
const rightStoch = svg`
  ${stochBand(1961, 2402, 1111, 1127, 1106)}
  ${hl(1961, 2402, 1070, "#ff3b2b", 1.2)}
  ${hl(1961, 2402, 1139, "#4caf50", 1.2)}
  ${line(rLongG, "#43a047")}${line(rLongR, "#f0402f")}
  ${line(rFastG, "#43a047")}${line(rFastR, "#f0402f")}
  ${tx(1951, 1070, "80.00", C.axis, "end")}${tx(1951, 1116, "40.00", C.axis, "end")}${tx(1951, 1162, "0.00", C.axis, "end")}
  ${tx(2411, 1066, "80.00")}${tx(2411, 1101, "60.00")}${tx(2411, 1136, "40.00")}
  ${timeLabels(timeR)}
  ${circBtn(1929, 1181, "Z")}${circBtn(2435, 1181, "A")}
`;

@customElement("app-root")
export class AppRoot extends LitElement {
  static styles = css`
    :host { display: flex; flex-direction: column; width: 2478px; height: 1229px; background: #1e222d; overflow: hidden; font-family: Roboto, "Liberation Sans", sans-serif; }
    .head { height: 27px; flex: none; padding: 3px 0 0 10px; box-sizing: border-box; color: #d1d4dc; font-size: 12.9px; line-height: 20px; }
    .charts { display: flex; gap: 3px; padding-left: 9px; flex: none; height: 1167px; }
    .chart { position: relative; display: flex; flex-direction: column; border: 1px solid #2a2e39; background: #000; flex: none; }
    .pane { display: block; background: #000; flex: none; }
    .sep { border-bottom: 1px solid #2a2e39; }
    .foot { flex: 1; display: flex; align-items: center; gap: 4px; padding-left: 10px; color: #d1d4dc; font-size: 14px; font-weight: 500; }
    .foot svg { display: block; }
    .gbp { position: absolute; left: 508px; top: 3px; width: 58px; height: 26px; box-sizing: border-box; border: 1px solid #363a45; border-radius: 3px; background: #131722; color: #d1d4dc; font-size: 12px; line-height: 24px; padding-left: 9px; }
    text.ax { font-family: Roboto, "Liberation Sans", sans-serif; font-size: 14px; dominant-baseline: central; }
    text.sm { font-size: 11px; }
    text.bold { font-weight: 700; }
    text.wm { font-family: Roboto, "Liberation Sans", sans-serif; fill: #1f2023; }
    text.big { font-size: 96px; }
    text.mid { font-size: 50px; }
  `;

  render() {
    return html`
      <div class="head">Tickmill published on TradingView.com, Oct 22, 2024 15:08 UTC+1</div>
      <div class="charts">
        <div class="chart">
          ${pane(10, 28, 1883, 888, "sep", leftMain)}
          ${pane(10, 917, 1883, 118, "sep", leftRsi)}
          ${pane(10, 1036, 1883, 157, "", leftStoch)}
        </div>
        <div class="chart">
          ${pane(1898, 28, 570, 889, "sep", rightMain)}
          ${pane(1898, 918, 570, 115, "sep", rightRsi)}
          ${pane(1898, 1034, 570, 159, "", rightStoch)}
          <div class="gbp">GBP</div>
        </div>
      </div>
      <div class="foot">
        <svg width="21" height="16" viewBox="0 0 36 28" fill="#d1d4dc"><path d="M14 22H7V11H0V4h14v18zM28 22h-8l7.5-18h8L28 22z"></path><circle cx="20" cy="8" r="4"></circle></svg>
        <span>TradingView</span>
      </div>
    `;
  }
}
